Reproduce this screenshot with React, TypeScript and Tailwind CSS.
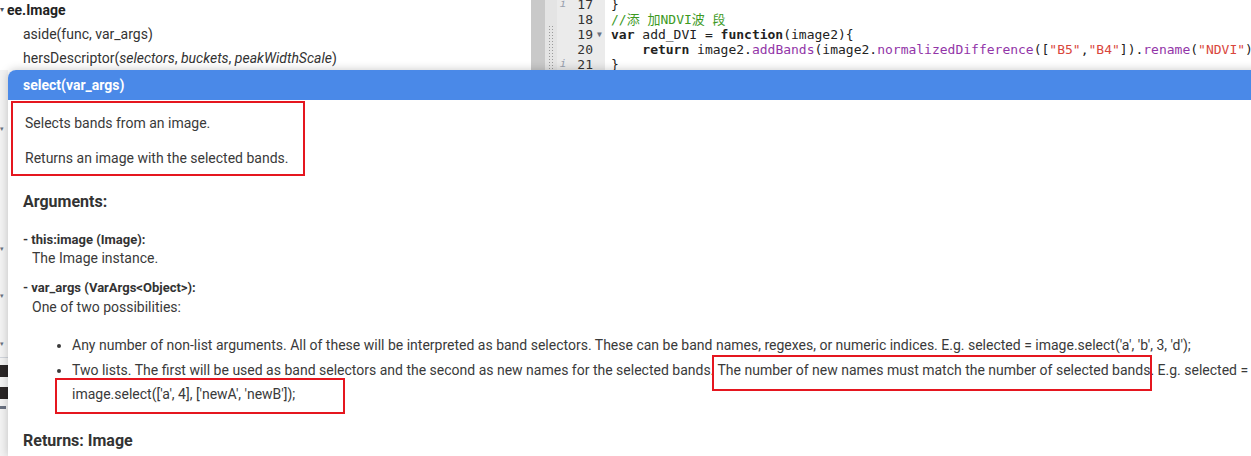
import React from 'react'

const mono = { fontFamily: '"DejaVu Sans Mono", "Noto Sans CJK SC", monospace' }

function CodeLine({ n, mark, fold, children }: { n: number; mark?: boolean; fold?: boolean; children?: React.ReactNode }) {
  return (
    <div className="flex h-[15px] items-center">
      <div className="w-[12px] shrink-0 flex justify-center text-[11px] italic text-gray-400">{mark ? 'i' : ''}</div>
      <div className="w-[24px] shrink-0 text-right text-[#333]">{n}</div>
      <div className="w-[12px] shrink-0 text-[8px] text-gray-500 pl-[4px]">{fold ? '▼' : ''}</div>
      <div className="pl-[6px] whitespace-pre text-[#222]">{children}</div>
    </div>
  )
}

function Background() {
  return (
    <div className="flex h-full">
      <div className="w-[531px] shrink-0 pt-[1px] text-[14px] text-[#333]">
        <div className="flex items-center h-[18px]">
          <span className="text-[8px] text-gray-600 w-[7px]">▾</span>
          <span className="font-bold text-[#222]">ee.Image</span>
        </div>
        <div className="pl-[23px] h-[24px] leading-[24px] mt-[3px]">aside(func, var_args)</div>
        <div className="pl-[23px] h-[24px] leading-[24px]">
          hersDescriptor(<i>selectors</i>, <i>buckets</i>, <i>peakWidthScale</i>)
        </div>
      </div>
      <div className="w-[14px] shrink-0 bg-[#c9c9c9]" />
      <div className="w-[12px] shrink-0 bg-[#e4e4e4] flex justify-center pt-[25px]">
        <div className="w-[6px] h-[45px] bg-[radial-gradient(#9a9a9a_0.8px,transparent_1px)] bg-[length:3px_3px]" />
      </div>
      <div className="flex-1 min-w-0 bg-white relative text-[13px]" style={mono}>
        <div className="absolute left-0 top-0 bottom-0 w-[48px] bg-[#ebebeb]" />
        <div className="relative -mt-[3px]">
          <CodeLine n={17} mark>{'}'}</CodeLine>
          <CodeLine n={18}>
            <span className="text-[#3d9a1f]">//添 加NDVI波 段</span>
          </CodeLine>
          <CodeLine n={19} fold>
            <b>var</b> add_DVI = <b>function</b>(image2){'{'}
          </CodeLine>
          <CodeLine n={20}>
            {'    '}
            <b>return</b> image2.<span className="text-[#9235a8]">addBands</span>(image2.
            <span className="text-[#9235a8]">normalizedDifference</span>([<span className="text-[#d9463c]">"B5"</span>,
            <span className="text-[#d9463c]">"B4"</span>]).<span className="text-[#9235a8]">rename</span>(
            <span className="text-[#d9463c]">"NDVI"</span>)
          </CodeLine>
          <CodeLine n={21} mark>{'}'}</CodeLine>
        </div>
      </div>
    </div>
  )
}

function LeftEdge() {
  return (
    <div className="absolute left-0 top-[70px] w-[8px] h-[386px] bg-[#f3f3f3] flex flex-col">
      <div className="h-[55px]" />
      <div className="text-[7px] leading-[8px] text-gray-500">▾</div>
      <div className="h-[112px]" />
      <div className="text-[7px] leading-[8px] text-gray-500">▾</div>
      <div className="h-[39px]" />
      <div className="text-[7px] leading-[8px] text-gray-500">▾</div>
      <div className="h-[40px]" />
      <div className="text-[7px] leading-[8px] text-gray-500">▾</div>
      <div className="h-[10px] border-b border-gray-300" />
      <div className="h-[7px]" />
      <div className="h-[12px] bg-[#2a2626]" />
      <div className="h-[10px]" />
      <div className="h-[12px] bg-[#2a2626]" />
      <div className="h-[7px]" />
      <div className="h-[3px] w-[6px] bg-gray-500" />
    </div>
  )
}

export default function App() {
  return (
    <div
      className="relative w-[1251px] h-[456px] overflow-hidden bg-white"
      style={{ fontFamily: 'Roboto, "Liberation Sans", sans-serif' }}
    >
      <Background />
      <LeftEdge />
      <div className="absolute left-[8px] top-[70px] w-[1280px] bottom-0 bg-white rounded-tl-[8px] shadow-[0_0_10px_rgba(0,0,0,0.22)] overflow-hidden text-[#3a3a3a]">
        <div className="h-[30px] bg-[#4a89e8] flex items-center pl-[15px] text-white font-bold text-[14px]">
          select(var_args)
        </div>
        <div className="relative">
          <div className="ml-[3px] mt-[1px] w-[294px] h-[75px] border-2 border-[#e5161f] pl-[12px] pt-[10px] text-[14px]">
            <p className="leading-[20px]">Selects bands from an image.</p>
            <p className="leading-[20px] mt-[15px]">Returns an image with the selected bands.</p>
          </div>
          <div className="pl-[15px] pt-[16px] text-[16px] font-bold text-[#333] leading-[20px]">Arguments:</div>
          <div className="pl-[15px] pt-[19px] text-[13px] font-bold text-[#333] leading-[18px]">- this:image (Image):</div>
          <div className="pl-[24px] text-[14px] leading-[18px]">The Image instance.</div>
          <div className="pl-[15px] pt-[12px] text-[13px] font-bold text-[#333] leading-[18px]">- var_args (VarArgs&lt;Object&gt;):</div>
          <div className="pl-[24px] text-[14px] leading-[20px]">One of two possibilities:</div>
          <ul className="list-disc pl-[64px] pt-[16px] text-[14px] leading-[24.5px]">
            <li>
              Any number of non-list arguments. All of these will be interpreted as band selectors. These can be band
              names, regexes, or numeric indices. E.g. selected = image.select('a', 'b', 3, 'd');
            </li>
            <li>
              Two lists. The first will be used as band selectors and the second as new names for the selected bands.
              The number of new names must match the number of selected bands. E.g. selected =
              <br />
              image.select(['a', 4], ['newA', 'newB']);
            </li>
          </ul>
          <div className="pl-[15px] pt-[24px] text-[16px] font-bold text-[#333] leading-[20px]">Returns: Image</div>
          <div className="absolute left-[47px] top-[277px] w-[290px] h-[36px] border-2 border-[#e5161f]" />
          <div className="absolute left-[704px] top-[254px] w-[440px] h-[36px] border-2 border-[#e5161f]" />
        </div>
      </div>
    </div>
  )
}
